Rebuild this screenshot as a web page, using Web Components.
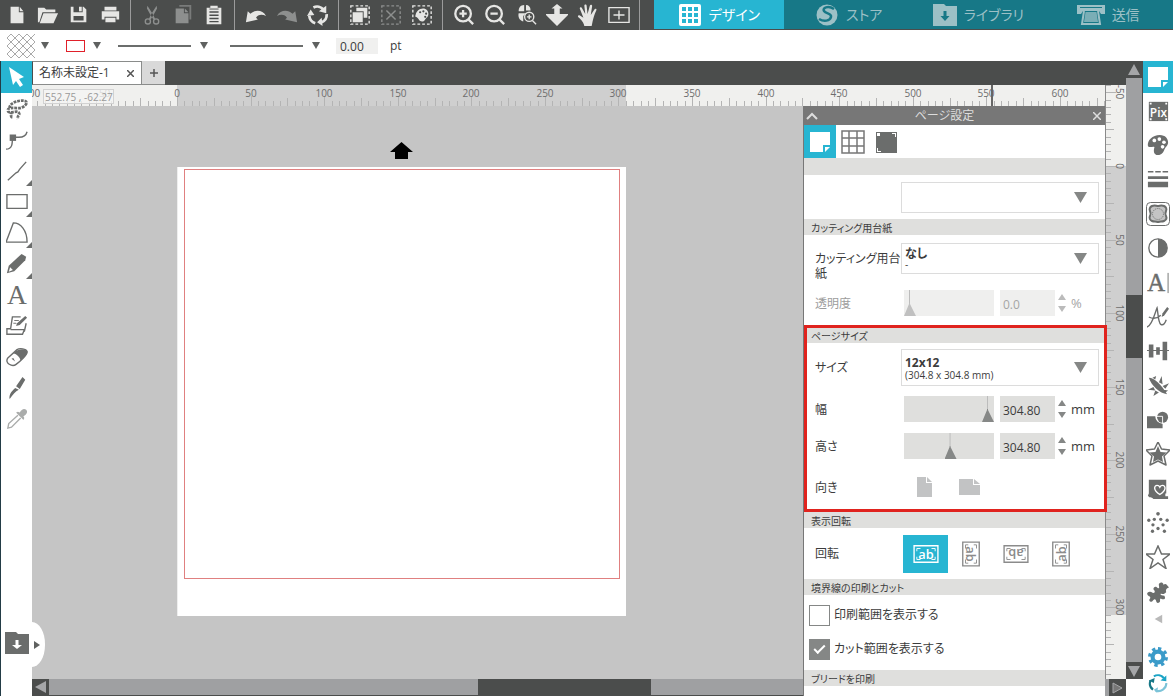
<!DOCTYPE html>
<html lang="ja">
<head>
<meta charset="utf-8">
<title>名称未設定-1</title>
<style>
  html, body { height: 100%; }
  body {
    margin: 0; overflow: hidden; background: #fff; color: #3c3c3c;
    font: 13px/16px "Open Sans", "Noto Sans CJK JP", sans-serif;
    --bar: #4b4d4c; --accent: #27b5d2; --teal: #177887; --ink: #6b6d6c; --track: #9fa0a2;
    font-feature-settings: "palt";
  }
</style>
</head>
<body>
<design-app></design-app>

<script>
const ICONS = {
  new: `<path fill="currentColor" d="M5 3h9v6h5v12H5z"/><path fill="currentColor" d="M15 3l4 5h-4z"/>`,
  open: `<path fill="currentColor" d="M1 20V4h7l2 2h10v3H6L2.500 20z"/><path fill="currentColor" d="M7 10h16l-5 11H3z"/>`,
  save: `<path fill="currentColor" fill-rule="evenodd" d="M3 3h3v6h10V3h1l3 3v14H3zm3 10v5h11v-5z"/><path fill="currentColor" d="M12 3h3v5h-3z"/>`,
  print: `<path fill="currentColor" d="M6 3h13v4H6zM3 8h19v9h-3v-3H6v3H3zM7 15h11v5H7z"/>`,
  cut: `<g fill="none" stroke="currentColor" stroke-width="1.500"><circle cx="7.500" cy="19" r="2.800"/><circle cx="16.500" cy="19" r="2.800"/></g><path fill="currentColor" d="M7 2l6.500 10 2 4.500-2 .5L11 13 6.500 5zM17 2l-6.500 10-2 4.500 2 .5 2.500-4 4.500-8z"/>`,
  copy: `<path fill="currentColor" d="M8 1h13v16h-2V3H8z" opacity=".7"/><path fill="currentColor" d="M4 5h9v5h5v11H4z"/><path fill="currentColor" d="M14 5l4 4h-4z"/>`,
  paste: `<path fill="currentColor" fill-rule="evenodd" d="M4 4h4V2h8v2h4v18H4zm3 4v1.500h10V8zm0 3.500V13h10v-1.500zM7 15v1.500h10V15zm0 3.500V20h10v-1.500z"/><path fill="#4b4d4c" d="M7 5h10v1H7z"/>`,
  undo: `<path fill="currentColor" d="M1 20L3 8l3 2.500C11 6 19 6 23 13c-4-2-9-2-11 2l2 2z"/>`,
  redo: `<path fill="currentColor" d="M23 20L21 8l-3 2.500C13 6 5 6 1 13c4-2 9-2 11 2l-2 2z"/>`,
  sync: `<g fill="none" stroke="currentColor" stroke-width="3"><path d="M7 3.800a9 9 0 0 1 11 2.200"/><path d="M21.500 11a9.500 9.500 0 0 1-5.500 9"/><path d="M9 21a9.500 9.500 0 0 1-6.500-8"/></g><path fill="currentColor" d="M21 2v8l-8-2zM17 24l-6-4 5-5zM0 13l4-7 4 6z"/>`,
  front: `<path fill="none" stroke="currentColor" stroke-width="1.500" stroke-dasharray="3 2.200" d="M2 2h20v20H2z"/><path fill="currentColor" d="M4 9h11v11H4zM8 4h12v11h-4V8H8z"/>`,
  deselect: `<path fill="none" stroke="currentColor" stroke-width="1.500" stroke-dasharray="3 2.200" d="M2 2h20v20H2z"/><path stroke="currentColor" stroke-width="1.600" d="M7 7l10 10M17 7L7 17"/>`,
  pickcolor: `<path fill="none" stroke="currentColor" stroke-width="1.500" stroke-dasharray="3 2.200" d="M2 2h20v20H2z"/><path fill="currentColor" d="M13 5c4 0 6 3 6 6s-2 4-3 5-1 3-4 3-3-2-5-4-3 0-2-3c1-4 4-7 8-7z"/><g fill="#4b4d4c"><circle cx="10" cy="9" r="1.200"/><circle cx="13.500" cy="8" r="1.200"/><circle cx="16.500" cy="10.500" r="1.200"/><circle cx="15.500" cy="14" r="1.200"/></g>`,
  zoomin: `<g fill="none" stroke="currentColor" stroke-width="2.500"><circle cx="11" cy="10.500" r="8.500"/><path d="M17 17l5 5"/><path d="M7 10.500h8M11 6.500v8"/></g>`,
  zoomout: `<g fill="none" stroke="currentColor" stroke-width="2.500"><circle cx="11" cy="10.500" r="8.500"/><path d="M17 17l5 5"/><path d="M7 10.500h8"/></g>`,
  mousezoom: `<path fill="currentColor" d="M10 1v7H4c0-4 2-7 6-7zM12 1c3 0 5 2 5 6h-5zM4 10h8l-3 3v6c-4-1-6-5-5-9z"/><g fill="none" stroke="currentColor" stroke-width="1.500"><circle cx="15.500" cy="14" r="5"/><path d="M19 18l4 4M13 14h5M15.500 11.500v5"/></g>`,
  pan: `<path fill="currentColor" d="M12 0l6 5h-3v6h10L12 24-1 11H9V5H6z"/>`,
  hand: `<path fill="currentColor" d="M8 24c-1-5-5-8-7-10 0-2 2-2 3-1l3 2L3 5c0-2 2-2 2.500-.5L9 11 8 2c0-2 2.500-2 2.500 0l1 9 2.500-9c.5-2 3-1 2.500.5L15 12l4-6c1-1.500 3-.5 2 1-2 4-3 8-4 12l-1 5z"/>`,
  fit: `<path fill="none" stroke="currentColor" stroke-width="1.500" d="M1 4h22v16H1z"/><path stroke="currentColor" stroke-width="1.500" d="M6 12h12M12 7v10"/>`,
  grid: `<rect x="1" y="1" width="22" height="22" rx="2" fill="#fff"/><path fill="#27b5d2" d="M4 4h4v4H4zM10 4h4v4h-4zM16 4h4v4h-4zM4 10h4v4H4zM10 10h4v4h-4zM16 10h4v4h-4zM4 16h4v4H4zM10 16h4v4h-4zM16 16h4v4h-4z"/>`,
  store: `<circle cx="12" cy="12" r="10.500" fill="currentColor"/><path fill="none" stroke="#177887" stroke-width="2.500" d="M19 6c-6-4-12-1-10 2s8 2 7 6-7 5-12 2"/>`,
  library: `<path fill="currentColor" d="M0 1h11l2 2h11v20H0z"/><path fill="#177887" d="M10.500 8h3v5h3L12 18l-4.500-5h3z"/>`,
  send: `<path fill="currentColor" d="M0 2h28v9h-4L22 8H6l-2 3H0z"/><path fill="#177887" d="M3 4h22v1H3z"/><path fill="none" stroke="currentColor" stroke-width="2" d="M7 8L5 21h18L21 8"/><path fill="currentColor" d="M8.500 9h11l1.500 10H7z" opacity=".75"/>`,
  select: `<path fill="#fff" d="M4 2l15 10-5 2 4 6-3 2-4-6-3 4z"/>`,
  lasso: `<path fill="none" stroke="currentColor" stroke-width="3" stroke-dasharray="3 1" d="M4 11C3 6 13 2 20 3c6 1 0 8-6 8S1 10 2 14s10-1 12 2-2 2-1 7M7 15c-3 3-1 6 0 6"/>`,
  points: `<path fill="none" stroke="currentColor" stroke-width="1.500" d="M0 22c7 0 7-6 7-13h7c6 0 8-2 9-6"/><path fill="currentColor" d="M4 6h7v7H4z"/>`,
  line: `<path fill="none" stroke="currentColor" stroke-width="1.500" d="M2 22l9-8 2-1 2-3 7-8"/>`,
  rect: `<path fill="none" stroke="currentColor" stroke-width="1.500" d="M1 4h22v15H1z"/>`,
  arc: `<path fill="none" stroke="currentColor" stroke-width="1.500" d="M0 22L8 1c8 0 15 8 15 21z"/>`,
  pencil: `<path fill="currentColor" d="M1 22l2-8L17 1l5 3-1 4L9 20z"/><path fill="#fff" d="M3 20.500l1.500-5 3 3z"/>`,
  text: `<text x="12" y="22" font-family="Liberation Serif" font-size="30" text-anchor="middle" fill="currentColor">A</text>`,
  sketch: `<path fill="none" stroke="currentColor" stroke-width="1.500" d="M16 2H7L5 15H1v6h17l2-5H5M22 9l-2 9"/><path fill="currentColor" d="M11 12l1-3 9-8 2 2-8 8z"/><path stroke="currentColor" d="M9 6h5M8 9h3"/>`,
  eraser: `<path fill="#fff" stroke="currentColor" stroke-width="1.500" d="M2 13L12 4c3-2 10-1 11 2s-8 11-12 14-13-1-9-7z"/><path fill="currentColor" d="M8 8c4-5 13-6 15-2 1 2-4 7-7 10-1-4-4-7-8-8zM6 14l4 3-2-4z"/>`,
  knife: `<path fill="currentColor" d="M11 10L18 0l3 3-6 10zM10 12l4 2c-4 2-6 5-10 10-1-3 1-8 6-12z"/>`,
  dropper: `<path fill="currentColor" d="M13 7l-2-2 2-1 2 1c2-4 5-5 7-3s1 5-3 7l1 2-1 2-2-2z"/><path fill="none" stroke="currentColor" stroke-width="1.500" d="M13 8L3 17l-1 5 4-1 10-10"/>`,
  librarydark: `<path fill="currentColor" d="M0 1h11l2 2h11v20H0z"/><path fill="#fff" d="M10.500 9h3v5h3.500L12 18l-5-4h3.500z"/>`,
  page: `<path fill="#fff" d="M2 2h20v13h-7v7H2z"/><path fill="#fff" d="M17 17h5l-5 5z"/>`,
  pix: `<path fill="currentColor" d="M2 2h21v21H2z"/><path fill="#fff" d="M3 3h2v2H3zM20 3h2v2h-2zM3 20h2v2H3zM20 20h2v2h-2z"/><text x="12.500" y="18" font-family="Open Sans" font-weight="600" font-size="13" text-anchor="middle" fill="#fff">Pix</text>`,
  palette: `<path fill="currentColor" d="M14 1c6 0 9 4 9 8s-3 5-4 8-3 6-7 6c-5 0-5-5-4-8s-6 1-7-2C0 7 6 1 14 1z"/><g fill="#fff"><circle cx="8" cy="7" r="2"/><circle cx="13.500" cy="5.500" r="2"/><circle cx="18.500" cy="9" r="2"/><circle cx="17" cy="14" r="2"/></g>`,
  lines: `<path stroke="currentColor" stroke-width="1.500" d="M1 3h6M9 3h6M17 3h6"/><path fill="currentColor" d="M1 8h22v3H1zM1 14h22v6H1z"/>`,
  trace: `<rect x="0.500" y="0.500" width="23" height="23" rx="4" fill="#fff" stroke="currentColor"/><path fill="#c4c4c4" stroke="currentColor" stroke-width="2" d="M6 4c3-1 4 0 6 0s3-1 6 0c2 1 3 3 2 5s-1 3 0 5 0 4-2 5-4 0-6 1c-2-1-4 0-6-1s-3-3-2-5 1-3 0-5 0-4 2-5z"/><circle cx="12" cy="12" r="5.500" fill="none" stroke="currentColor" stroke-dasharray="1 1"/>`,
  contrast: `<circle cx="12" cy="12" r="10" fill="#fff" stroke="currentColor" stroke-width="1.500"/><path fill="currentColor" d="M12 2a10 10 0 0 1 0 20z"/>`,
  textstyle: `<text x="10" y="21" font-family="Liberation Serif" font-size="27" text-anchor="middle" fill="currentColor" stroke="currentColor" stroke-width=".5">A</text><path stroke="currentColor" d="M23 1v22"/>`,
  glyphpen: `<path fill="none" stroke="currentColor" stroke-width="1.500" d="M0 23C6 21 9 6 11 2c1 4 1 16 4 18s5-2 6-5M2 12c6 3 10 1 13-2"/><path fill="currentColor" d="M16 12l1-4 5-7 2 2-5 7z"/>`,
  align: `<path fill="currentColor" d="M2 5h5v14H2zM10 8h4v8h-4zM17 2h5v20h-5zM0 11h24v1H0z"/>`,
  replicate: `<path fill="currentColor" d="M2 3c6 0 14 8 20 18C14 20 5 12 2 3zM13 8l3-7 1 9zM17 12l7-3-4 6zM7 13l-6 3 8 1zM9 17l-2 6 6-4zM6 3l4-2-1 4zM18 16l5 1-3 2z"/>`,
  modify: `<path fill="currentColor" d="M0 8h9a8 8 0 0 0 8 8v5H0z"/><circle cx="17" cy="9" r="6" fill="currentColor"/><path fill="none" stroke="#fff" d="M10 8h7v8"/>`,
  offset: `<path fill="#fff" stroke="currentColor" stroke-width="1.500" stroke-linejoin="round" d="M12 0l3.500 7 8.500 1-6 6 2 9-8-4-8 4 2-9-6-6 8.500-1z"/><path fill="currentColor" d="M12 4l2.500 6 6 .5-4.500 4 1 5.500-5-2.500L7 20l1-5.500-4.500-4 6-.5z"/>`,
  print3: `<path fill="currentColor" d="M2 2h19v15H2zM2 17h18v3h3v3H7c-2-3-5-1-6-4z"/><path fill="currentColor" stroke="#fff" stroke-width="1.500" d="M14 18c-8-5-6-10-3-10 2 0 3 2 3 2s1-2 3-2c3 0 5 5-3 10z"/>`,
  dots: `<g fill="currentColor"><circle cx="12" cy="2" r="2"/><circle cx="8" cy="8" r="1.800"/><circle cx="15" cy="8" r="1.800"/><circle cx="2" cy="9" r="1.800"/><circle cx="22" cy="9" r="1.800"/><circle cx="6.500" cy="14" r="1.800"/><circle cx="17.500" cy="14" r="1.800"/><circle cx="12" cy="18" r="1.800"/><circle cx="6" cy="21" r="1.800"/><circle cx="19" cy="21" r="1.800"/></g>`,
  star: `<path fill="#fff" stroke="currentColor" stroke-width="1.500" d="M12 1l3.500 8H24l-7 5.500 3 9-8-5.500-8 5.500 3-9L0 9h8.500z"/>`,
  puzzle: `<path fill="currentColor" d="M13 5c-1-3 4-5 5-1 3-2 4 1 6 3-3 1-4 3-3 5-3 4-5 1-6 2s1 2 4 2c2 4-1 5-4 3-2 1 1 4-3 5-3 0-1-4-4-4-2 1-2 4-5 2-2-2 2-3 0-5-3-1-4-4-1-5 3-1 3 1 5 1s2-2 0-4c0-3 3-4 5-1 2 0 1-2 1-3z"/>`,
  back: `<path fill="#b9b9b9" d="M17 7v10L8 12z"/>`,
  gear: `<path fill="none" stroke="#3b9bc9" stroke-width="4" stroke-dasharray="3.900 3.950" d="M12 2a10 10 0 1 1-.01 0"/><circle cx="12" cy="12" r="6.500" fill="none" stroke="#3b9bc9" stroke-width="5"/>`,
  syncblue: `<g fill="none" stroke-width="2.500"><path stroke="#1ba4c6" d="M7 4a9.500 9.500 0 0 1 12 2"/><path stroke="#7cc3d8" d="M22 12a9.500 9.500 0 0 1-13 9"/><path stroke="#177887" d="M6 20A9.500 9.500 0 0 1 3 9"/></g><path fill="#1ba4c6" d="M22 3v7l-7-1z"/><path fill="#7cc3d8" d="M11 24l-4-4 5-3z"/><path fill="#177887" d="M1 9l7-3-1 6z"/>`,
  gridpage: `<path fill="none" stroke="#777" stroke-width="1.500" d="M1 1h22v22H1zM8 1v22M16 1v22M1 8h22M1 16h22"/>`,
  regmarks: `<path fill="currentColor" d="M2 2h21v21H2z"/><path fill="#fff" d="M3 3h3v3H3zM18 3h4v4h-1V4h-3zM3 18h1v3h3v1H3z"/>`,
  portrait: `<path fill="#c2c3c4" d="M3 1h9v6h6v14H3z"/><path fill="#c2c3c4" d="M13 1l5 5h-5z"/>`,
  landscape: `<path fill="#c2c3c4" d="M0 3h14v6h7v10H0z"/><path fill="#c2c3c4" d="M15 3l6 5h-6z"/>`,
  ab: `<path fill="none" stroke="currentColor" stroke-width="1.500" d="M1 3h26v18H1z"/><path fill="none" stroke="currentColor" d="M4 9V6h4M20 6h4v3M4 15v3h4M20 18h4v-3"/><text x="14" y="17" font-family="Open Sans" font-weight="600" font-size="14" text-anchor="middle" fill="currentColor">ab</text>`,
  hatch: `<path fill="none" stroke="#a9a9a9" d="M0 4l4-4 24 24M0 12L12 0l16 16M0 20L20 0l8 8M4 24L28 0M12 24L28 8M20 24l8-8M0 4l20 20M0 12l12 12M0 20l4 4"/>`,
};
const WIDE = { send: 28, ab: 28, hatch: 28 };

const define = (name, markup, setup) => {
  const base = `<style>*{box-sizing:border-box}:host{display:block;box-sizing:border-box}
    button{font:inherit;color:inherit;border:0;padding:0;margin:0;background:none;display:flex;align-items:center;justify-content:center}</style>`;
  customElements.define(name, class extends HTMLElement {
    constructor() {
      super();
      this.attachShadow({ mode: 'open' });
    }
    connectedCallback() {
      if (this.shadowRoot.childNodes.length) return;
      const body = document.createElement('template');
      body.innerHTML = base + (typeof markup === 'function' ? markup(n => this.getAttribute(n) ?? '') : markup);
      this.shadowRoot.append(body.content.cloneNode(true));
      if (setup) setup(this);
    }
  });
};

define('ui-icon', a => {
  const w = WIDE[a('name')] || 24, s = +(a('size') || 24);
  return `<style>:host{display:inline-flex}svg{display:block}</style>
  <svg aria-hidden="true" width="${Math.round(w * s / 24)}" height="${s}" viewBox="0 0 ${w} 24">${ICONS[a('name')]}</svg>`;
});

define('down-arrow', a => `<style>:host{display:inline-flex;pointer-events:none}</style>
  <svg aria-hidden="true" width="${a('w') || 8}" height="${a('h') || 7}" viewBox="0 0 8 7" preserveAspectRatio="none"><path fill="${a('fill') || '#5f6160'}" d="${a('up') ? 'M0 7h8L4 0z' : 'M0 0h8L4 7z'}"/></svg>`);

define('tool-button', a => `<style>
  :host{display:flex;color:${a('tone') || 'inherit'}}
  button{flex:1;background:${a('active') ? 'var(--accent)' : 'none'};position:relative}
  button::after{content:"";display:${a('more') ? 'block' : 'none'};position:absolute;right:0;bottom:0;border:3px solid;border-color:transparent #6b6d6c #6b6d6c transparent}
  </style><button aria-label="${a('label')}"><ui-icon name="${a('icon')}" size="${a('size') || 24}"></ui-icon></button>`);

define('mode-tab', a => `<style>
  :host{flex:1;display:flex;color:${a('active') ? '#fff' : '#9cc0c6'}}
  button{flex:1;gap:7px;font-size:14px;line-height:20px;background:${a('active') ? 'var(--accent)' : 'var(--teal)'}}
  </style><button role="tab" aria-selected="${!!a('active')}"><ui-icon name="${a('icon')}" size="${a('size') || 24}"></ui-icon><slot></slot></button>`);

const groups = [
  [['new', '新規'], ['open', '開く'], ['save', '保存'], ['print', '印刷']],
  [['cut', '切り取り', 1], ['copy', 'コピー', 1], ['paste', '貼り付け']],
  [['undo', '元に戻す'], ['redo', 'やり直し', 1], ['sync', '更新']],
  [['front', 'すべて選択'], ['deselect', '選択解除', 1], ['pickcolor', '色で選択']],
  [['zoomin', '拡大'], ['zoomout', '縮小'], ['mousezoom', '選択ズーム'], ['pan', 'ドラッグズーム'], ['hand', '移動'], ['fit', '全体表示']],
];
define('top-bar', `<style>
  :host{display:flex;height:30px;background:var(--bar);padding-bottom:1px}
  .tools{display:flex;width:654px;flex:none;padding-left:1px;color:#e6e6e4}
  .tools tool-button{width:31px}
  hr{width:1px;height:30px;margin:0 5px;border:0;background:#9b9b9b}
  .modes{display:flex;flex:1}
  </style>
  <div class="tools" role="toolbar">${groups.map(g => g.map(([i, l, dim]) =>
    `<tool-button icon="${i}" label="${l}" size="22"${dim ? ' tone="#8d8f8e"' : ''}></tool-button>`).join('') + '<hr>').join('')}</div>
  <div class="modes" role="tablist">
    <mode-tab icon="grid" active="1">デザイン</mode-tab><mode-tab icon="store">ストア</mode-tab>
    <mode-tab icon="library">ライブラリ</mode-tab><mode-tab icon="send">送信</mode-tab>
  </div>`);

define('option-bar', `<style>
  :host{display:flex;align-items:center;height:31px;background:#fff;padding-left:7px}
  button{gap:6px;margin-right:17px}
  .swatch{width:19px;height:12px;border:1px solid #e0202a}
  .stroke{width:73px;height:2px;background:#6b6d6c}
  .color{gap:8px}.line{gap:9px;margin-right:22px}.line.end{margin-right:16px}
  input{width:42px;height:16px;border:0;padding:1px 4px 0;margin-right:12px;background:#f0f0ef;font:12px/15px "Open Sans",sans-serif;color:#3c3c3c}
  label{font-size:12px}
  </style>
  <button class="fill" aria-label="塗りつぶし"><ui-icon name="hatch"></ui-icon><down-arrow></down-arrow></button>
  <button class="color" aria-label="線の色"><span class="swatch"></span><down-arrow></down-arrow></button>
  <button class="line" aria-label="線種"><span class="stroke"></span><down-arrow></down-arrow></button>
  <button class="line end" aria-label="線の終端"><span class="stroke"></span><down-arrow></down-arrow></button>
  <input id="w" value="0.00" aria-label="線幅"><label for="w">pt</label>`);

const leftTools = [['select', '選択'], ['lasso', '投げ縄'], ['points', 'ポイント編集'], ['line', '線', 1], ['rect', '長方形', 1],
  ['arc', '円弧', 1], ['pencil', 'フリーハンド', 1], ['text', 'テキスト'], ['sketch', 'スケッチ'], ['eraser', '消しゴム'], ['knife', 'ナイフ'], ['dropper', 'スポイト']];
define('tool-rail', `<style>
  :host{display:flex;flex-direction:column;width:32px;background:#fff;border-left:1px solid #233c46;color:var(--ink);padding-bottom:37px}
  tool-button{height:31px;flex:none}
  tool-button[active]{height:32px}
  .drawer{margin-top:auto;position:relative;height:32px;display:flex}
  .drawer tool-button{flex:1;height:32px}
  .pull{position:absolute;left:31px;top:-5px;width:13px;height:45px;background:#fff;border-radius:0 13px 13px 0/0 22px 22px 0;z-index:2;padding-right:4px}
  </style>
  ${leftTools.map(([i, l, m], n) => `<tool-button icon="${i}" label="${l}" size="${n ? 22 : 24}"${n ? '' : ' active="1"'}${m ? ' more="1"' : ''}${i === 'dropper' ? ' tone="#aaacab"' : ''}></tool-button>`).join('')}
  <div class="drawer"><tool-button icon="librarydark" label="ライブラリ"></tool-button>
  <button class="pull" aria-label="開く"><svg width="6" height="8" aria-hidden="true"><path fill="#5f6160" d="M0 0l6 4-6 4z"/></svg></button></div>`);

define('doc-tabs', `<style>
  :host{display:flex;height:24px;background:var(--bar)}
  .tab{display:flex;align-items:center;width:110px;background:#fff;border:1px solid #8a8c8b;border-left-color:#4b4d4c;padding:0 5px 0 6px}
  .tab b{font-weight:400;font-size:12px;flex:1;white-space:nowrap}
  .tab button{width:12px}
  .add{width:23px;background:#d9d9d9;border-bottom:1px solid #8a8c8b}
  </style>
  <div class="tab"><b>名称未設定-1</b><button aria-label="閉じる"><svg width="7" height="7" aria-hidden="true"><path stroke="#555" stroke-width="1.500" d="M0 0l7 7M7 0L0 7"/></svg></button></div>
  <button class="add" aria-label="新しいタブ"><svg width="8" height="8" aria-hidden="true"><path stroke="#555" stroke-width="1.500" d="M0 4h8M4 0v8"/></svg></button>`);

/* Ruler scale: 50 mm spans 73.58 px; a tick every 5 mm. Redrawn whenever its length changes. */
define('axis-ruler', a => {
  const vertical = a('axis') === 'y';
  return `<style>:host{overflow:hidden;background:#f0f0ee;${vertical ? 'width:21px;border-left:1px solid #8a8a8a;flex:1;min-height:0' : 'height:21px'}}
    svg{display:block;width:100%;height:100%;overflow:hidden}
    text{font:10px "Open Sans",sans-serif;fill:#6d6d6d;text-anchor:middle}rect{fill:#cfcfcf}path{stroke:#b4b4b4}.cursor{stroke:#666;stroke-width:2}</style>
    <svg></svg>`;
}, host => {
  const svg = host.shadowRoot.querySelector('svg');
  const vertical = host.getAttribute('axis') === 'y', zero = +host.getAttribute('zero'), step = 7.358;
  const draw = () => {
    const size = vertical ? host.clientHeight : host.clientWidth;
    let out = vertical ? `<rect x="0" y="${zero}" width="21" height="449"/>` : `<rect x="${zero}" y="0" width="449" height="21"/>`;
    for (let i = -20; Math.round(zero + i * step) < size; i++) {
      const p = Math.round(zero + i * step);
      if (p < -8) continue;
      const major = i % 10 === 0, mid = i % 5 === 0;
      const len = major ? 10 : mid ? 8 : 5;
      out += vertical ? `<path d="M0 ${p + .5}H${len}"/>` : `<path d="M${p + .5} ${21 - len}V21"/>`;
      if (major && p + 8 < size) out += vertical
        ? `<text transform="translate(10 ${p}) rotate(90)">${i * 5}</text>`
        : `<text x="${p}" y="12">${i * 5}</text>`;
    }
    if (!vertical) out += '<path class="cursor" d="M960 0v21"/>';
    svg.innerHTML = out;
  };
  new ResizeObserver(draw).observe(host);
});

define('scroll-bar', a => {
  const v = a('axis') === 'y';
  const tri = v ? ['M6 0l6 11H0z', 'M0 1h12L6 12z'] : ['M11 0v12L0 6z', 'M0 0l11 6-11 6z'];
  const parts = a('parts').split(' ');
  const btn = (d, l) => `<button aria-label="${l}"><svg width="12" height="12" aria-hidden="true"><path fill="#a5a6a8" d="${d}"/></svg></button>`;
  return `<style>
  :host{display:flex;flex-direction:${v ? 'column' : 'row'};${v ? 'width:17px;border-right:1px solid var(--bar)' : 'height:17px;border-bottom:1px solid var(--bar)'};background:var(--track)}
  button{flex:none;${v ? 'height:17px' : 'width:17px'};background:var(--bar)}
  .thumb{background:var(--bar)}</style>
  ${btn(tri[0], '戻る')}<i style="flex:${parts[0]}"></i><i class="thumb" style="flex:${parts[1]}"></i><i style="flex:${parts[2]}"></i>${a('ends') === '1' ? '' : btn(tri[1], '進む')}`;
});

define('art-board', `<style>
  :host{display:block;flex:1;min-height:0;overflow:hidden;background:#c5c5c5;padding:36px 0 0 145px}
  .up{display:block;margin:0 0 8px 213px}
  .sheet{width:449px;height:449px;background:#fff;padding:2px 6px 37px;border-left:1px solid #eee}
  .cut{height:100%;border:1px solid #e08080}
  </style>
  <svg class="up" width="23" height="17" aria-hidden="true"><path d="M11.500 0L23 10h-5v7H5v-7H0z"/></svg>
  <div class="sheet"><div class="cut"></div></div>`);

define('panel-section', a => `<style>
  header{height:16px;background:#dfdfdd;padding:1px 7px 0;font-size:10px;line-height:16px}
  :host([first]) header{height:17px}
  :host([marked]){border:3px solid #e0231e;margin-right:-2px;position:relative;z-index:1;background:#fff}
  :host([marked]) header{height:15px;padding:0 4px}
  :host([marked]) .body{margin-left:-3px;margin-right:-1px}
  </style><header>${a('title')}</header><div class="body"><slot></slot></div>`);

define('panel-row', a => `<style>
  :host{display:grid;grid-template-columns:86px 1fr;align-items:center;height:${a('h')}px;padding:0 6px 0 11px;font-size:12px}
  :host([dim]) .label{color:#9c9c9c}
  :host([low]) .label{align-self:end}
  .label{line-height:15px}
  .body{display:flex;align-items:center}
  </style><div class="label">${a('label')}</div><div class="body"><slot></slot></div>`);

define('drop-select', a => `<style>
  :host{flex:1;display:grid;height:${a('h') || 31}px;border:1px solid #dcdcdc;background:#fff}
  :host>*{grid-area:1/1}
  select{appearance:none;border:0;background:none;margin:0;padding:2px 3px ${a('note') ? 13 : 2}px;font:700 12px/15px "Open Sans","Noto Sans CJK JP",sans-serif;font-feature-settings:"palt";color:#3c3c3c;width:100%;height:100%}
  span{align-self:end;padding:0 3px 3px;font-size:10px;line-height:14px;pointer-events:none}
  down-arrow{justify-self:end;align-self:center;margin-right:11px}
  </style><select aria-label="${a('label')}"><option>${a('value')}</option></select>${a('note') ? `<span>${a('note')}</span>` : ''}
  <down-arrow w="13" h="11" fill="#858786"></down-arrow>`);

define('measure-field', a => {
  const off = a('off') ? 'disabled' : '';
  return `<style>
  :host{display:flex;align-items:center;flex:1;padding-left:3px;color:${off ? '#a5a5a5' : '#3c3c3c'}}
  input{border:0;margin:0;background:${off ? '#efefee' : '#dfdfdd'};height:26px}
  input[type=range]{appearance:none;width:90px;overflow:hidden}
  input[type=range]::-webkit-slider-thumb{appearance:none;width:12px;height:26px;clip-path:polygon(5px 0,6px 0,6px 14px,12px 26px,0 26px,5px 14px);background:linear-gradient(#bcbcbc 13px,${off ? '#c0c0c0' : '#868887'} 13px)}
  input[type=text]{width:55px;margin-left:6px;padding:2px 3px 0;font:12px/16px "Open Sans",sans-serif;color:inherit}
  .spin{display:flex;flex-direction:column;gap:6px;margin:0 5px 0 3px}
  label{font-size:13px}
  </style><input type="range" min="0" max="100" value="${a('pos')}" aria-label="${a('label')}" ${off}>
  <input type="text" value="${a('value')}" id="v" aria-label="${a('label')}" ${off}>
  <div class="spin"><button aria-label="増やす" ${off}><down-arrow up="1" h="6" fill="${off ? '#bbb' : '#858786'}"></down-arrow></button><button aria-label="減らす" ${off}><down-arrow h="6" fill="${off ? '#bbb' : '#858786'}"></down-arrow></button></div>
  <label for="v">${a('unit')}</label>`;
});

define('rotate-picker', `<style>
  :host{display:flex;padding-left:2px;color:#8b8b8b}
  button{width:45px;height:38px;--r:0deg}
  button.on{background:var(--accent);color:#fff}
  ui-icon{rotate:var(--r)}
  </style>
  <button class="on" aria-label="0°"><ui-icon name="ab" size="22"></ui-icon></button>
  <button style="--r:90deg" aria-label="90°"><ui-icon name="ab" size="22"></ui-icon></button>
  <button style="--r:180deg" aria-label="180°"><ui-icon name="ab" size="22"></ui-icon></button>
  <button style="--r:270deg" aria-label="270°"><ui-icon name="ab" size="22"></ui-icon></button>`);

define('orient-picker', `<style>
  :host{display:flex;padding-left:2px}button{width:45px;height:30px}
  </style><button aria-label="縦"><ui-icon name="portrait"></ui-icon></button><button aria-label="横"><ui-icon name="landscape"></ui-icon></button>`);

define('check-row', a => `<style>
  :host{display:flex;align-items:center;height:${a('h')}px;padding-left:5px}
  label{display:flex;align-items:center;gap:4px;font-size:12px}
  input{appearance:none;width:21px;height:21px;margin:0;border:1px solid #858786;display:grid;place-items:center}
  input:checked{background:#858786}
  input:checked::after{content:"";width:9px;height:4px;margin-bottom:3px;border:solid #fff;border-width:0 0 2px 2px;rotate:-45deg}
  </style><label><input type="checkbox" ${a('checked')}><slot></slot></label>`);

define('page-panel', `<style>
  :host{display:flex;flex-direction:column;width:302px;flex:none;background:#fff;border-left:1px solid #777;position:relative;z-index:1}
  .title{display:flex;align-items:center;height:19px;flex:none;padding:0 4px 0 2px;background:#777;color:#ddd;font-size:12px}
  .title span{flex:1;text-align:center;padding-right:22px}
  .tabs{display:flex;height:33px;flex:none}
  .tabs tool-button{width:33px;color:var(--ink)}
  .tabs tool-button:first-child{width:32px}
  panel-section{flex:none}
  </style>
  <div class="title"><button aria-label="折りたたむ"><svg width="12" height="8" aria-hidden="true"><path fill="none" stroke="#ddd" stroke-width="2" d="M1 7l5-5 5 5"/></svg></button>
    <span>ページ設定</span><button aria-label="閉じる"><svg width="8" height="8" aria-hidden="true"><path stroke="#ddd" stroke-width="1.500" d="M0 0l8 8M8 0L0 8"/></svg></button></div>
  <div class="tabs"><tool-button icon="page" label="ページ" active="1"></tool-button><tool-button icon="gridpage" label="グリッド"></tool-button><tool-button icon="regmarks" label="トンボ"></tool-button></div>
  <panel-section first title=""><panel-row h="44" label=""><drop-select label="プリセット" value=""></drop-select></panel-row></panel-section>
  <panel-section title="カッティング用台紙">
    <panel-row low h="46" label="カッティング用台紙"><drop-select label="カッティング用台紙" value="なし" note="-"></drop-select></panel-row>
    <panel-row h="44" label="透明度" dim><measure-field label="透明度" pos="0" value="0.0" unit="%" off="1"></measure-field></panel-row>
  </panel-section>
  <panel-section marked title="ページサイズ">
    <panel-row h="49" label="サイズ"><drop-select h="37" label="サイズ" value="12x12" note="(304.8 x 304.8 mm)"></drop-select></panel-row>
    <panel-row h="34" label="幅"><measure-field label="幅" pos="100" value="304.80" unit="mm"></measure-field></panel-row>
    <panel-row h="40" label="高さ"><measure-field label="高さ" pos="52" value="304.80" unit="mm"></measure-field></panel-row>
    <panel-row h="43" label="向き"><orient-picker></orient-picker></panel-row>
  </panel-section>
  <panel-section title="表示回転"><panel-row h="51" label="回転"><rotate-picker></rotate-picker></panel-row></panel-section>
  <panel-section title="境界線の印刷とカット"><check-row h="40">印刷範囲を表示する</check-row><check-row h="28" checked="checked">カット範囲を表示する</check-row><div style="height:7px"></div></panel-section>
  <panel-section title="ブリードを印刷"></panel-section>`);

const rightTools = ['pix', 'palette', 'lines', 'trace', 'contrast', 'textstyle', 'glyphpen', 'align', 'replicate', 'modify', 'offset', 'print3', 'dots', 'star', 'puzzle'];
const rightLabels = ['PixScan', '塗りつぶし', '線', 'トレース', '画像効果', 'テキスト', 'スケッチ', '整列', '複製', '変更', 'オフセット', '印刷', 'ラインストーン', '図形', 'パズル'];
define('effect-rail', `<style>
  :host{display:flex;flex-direction:column;width:30px;background:#fff;color:var(--ink)}
  .head{height:32px}.list{flex:1;display:flex;flex-direction:column;padding-top:1px}
  .list tool-button{flex:1}.less{height:20px;margin-bottom:15px}.foot{height:26px}
  </style><tool-button class="head" icon="page" label="ページ設定" active="1"></tool-button>
  <div class="list">${rightTools.map((i, n) => `<tool-button icon="${i}" label="${rightLabels[n]}" size="${['trace', 'star', 'offset'].includes(i) ? 24 : 22}"></tool-button>`).join('')}</div>
  <tool-button class="less" icon="back" label="隠す" size="20"></tool-button>
  <tool-button class="foot" icon="gear" label="設定" size="20"></tool-button><tool-button class="foot" icon="syncblue" label="同期" size="20"></tool-button>`);

define('design-app', `<style>
  :host{display:flex;flex-direction:column;height:100vh}
  .main{flex:1;display:flex;min-height:0}
  .center{flex:1;display:flex;flex-direction:column;min-width:0}
  .stage{flex:1;display:flex;min-height:0}
  .work{flex:1;display:flex;flex-direction:column;min-width:0}
  .rulerbox{position:relative}
  output{position:absolute;left:11px;top:4px;width:71px;height:15px;background:rgba(245,245,244,.8);border:1px solid #d2d2d2;font-size:10px;line-height:14px;color:#999;padding-left:1px;white-space:nowrap}
  .view{flex:1;display:flex;min-height:0}
  .board{flex:1;display:flex;flex-direction:column;min-width:0}
  .side{display:flex;flex-direction:column;width:21px;background:var(--track)}
  .side button{height:17px;width:17px;background:var(--bar);align-self:end}
  .vs{display:flex;flex-direction:column;padding-bottom:17px}
  .vs scroll-bar{flex:1}
  </style>
  <top-bar></top-bar><option-bar></option-bar>
  <div class="main">
    <tool-rail></tool-rail>
    <div class="center">
      <doc-tabs></doc-tabs>
      <div class="stage">
        <div class="work">
          <div class="rulerbox"><axis-ruler axis="x" zero="145"></axis-ruler><output>552.75 , -62.27</output></div>
          <div class="view">
            <div class="board"><art-board></art-board><scroll-bar axis="x" parts="429 173 152" ends="1"></scroll-bar></div>
            <page-panel></page-panel>
          </div>
        </div>
        <div class="side"><axis-ruler axis="y" zero="81"></axis-ruler><button aria-label="右へ"><svg width="11" height="12" aria-hidden="true"><path fill="#777" stroke="#a5a6a8" d="M1 1l9 5-9 5z"/></svg></button></div>
      </div>
    </div>
    <div class="vs"><scroll-bar axis="y" parts="217 63 305"></scroll-bar></div>
    <effect-rail></effect-rail>
  </div>`);
</script>
</body>
</html>
